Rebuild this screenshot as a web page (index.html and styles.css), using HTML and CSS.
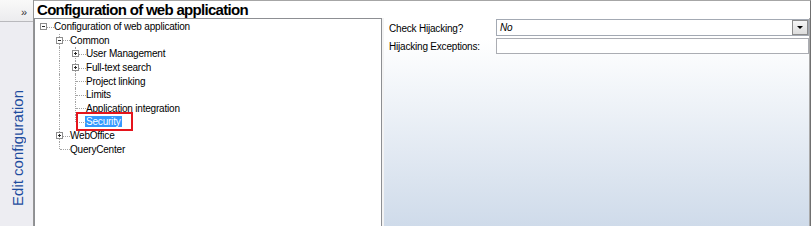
FILE: index.html
```html
<!DOCTYPE html>
<html lang="en">
<head>
<meta charset="utf-8">
<title>Configuration of web application</title>
<link rel="stylesheet" href="styles.css">
</head>
<body>
<div class="app">
  <aside class="side">
    <div class="side-btn">»</div>
    <div class="side-body"><span class="side-label">Edit configuration</span></div>
  </aside>
  <main class="main">
    <div class="title">Configuration of web application</div>
    <div class="content">
      <div class="tree">
        <div class="row">
          <span class="c h"><span class="box"></span></span>
          <span class="t">Configuration of web application</span>
        </div>
        <div class="row">
          <span class="c"></span>
          <span class="c v h"><span class="box"></span></span>
          <span class="t">Common</span>
        </div>
        <div class="row">
          <span class="c"></span>
          <span class="c v"></span>
          <span class="c v h"><span class="box plus"></span></span>
          <span class="t">User Management</span>
        </div>
        <div class="row">
          <span class="c"></span>
          <span class="c v"></span>
          <span class="c v h"><span class="box plus"></span></span>
          <span class="t">Full-text search</span>
        </div>
        <div class="row">
          <span class="c"></span>
          <span class="c v"></span>
          <span class="c v h"></span>
          <span class="t">Project linking</span>
        </div>
        <div class="row">
          <span class="c"></span>
          <span class="c v"></span>
          <span class="c v h"></span>
          <span class="t">Limits</span>
        </div>
        <div class="row">
          <span class="c"></span>
          <span class="c v"></span>
          <span class="c v h"></span>
          <span class="t">Application integration</span>
        </div>
        <div class="row">
          <span class="c"></span>
          <span class="c v"></span>
          <span class="c up h"></span>
          <span class="t sel">Security</span>
        </div>
        <div class="row">
          <span class="c"></span>
          <span class="c v h"><span class="box plus"></span></span>
          <span class="t">WebOffice</span>
        </div>
        <div class="row">
          <span class="c"></span>
          <span class="c up h"></span>
          <span class="t">QueryCenter</span>
        </div>
        <div class="annot"></div>
      </div>
      <div class="split"></div>
      <div class="panel">
        <div class="form">
          <label class="lbl">Check Hijacking?</label>
          <div class="combo"><span class="val">No</span><span class="drop"></span></div>
          <label class="lbl">Hijacking Exceptions:</label>
          <div class="textbox"></div>
        </div>
      </div>
    </div>
  </main>
</div>
</body>
</html>
```

FILE: styles.css
```css
* { box-sizing: border-box; }
html, body { margin: 0; padding: 0; }
body {
  width: 812px;
  height: 226px;
  overflow: hidden;
  background: #ffffff;
  font-family: "Liberation Sans", Arial, sans-serif;
  color: #000;
}
.app { display: flex; height: 226px; }

/* left collapsed sidebar */
.side {
  width: 34px;
  flex: none;
  border-right: 1px solid #959595;
  background: #ededf2;
  display: flex;
  flex-direction: column;
}
.side-btn {
  height: 22px;
  border-bottom: 1px solid #b9b9bd;
  background: linear-gradient(#f9f9f9, #ececee);
  display: flex;
  align-items: center;
  justify-content: flex-end;
  padding: 2px 6px 0 0;
  font-size: 11px;
  color: #333;
}
.side-body {
  flex: 1;
  display: flex;
  flex-direction: column;
  justify-content: flex-end;
  padding-bottom: 20px;
}
.side-label {
  writing-mode: vertical-rl;
  transform: rotate(180deg);
  align-self: flex-start;
  margin-left: 9px;
  font-size: 15px;
  line-height: 17px;
  color: #1d4c9e;
  white-space: nowrap;
}

/* main area */
.main {
  width: 777px;
  flex: none;
  display: flex;
  flex-direction: column;
  border-top: 1px solid #a6a6a6;
  border-right: 1px solid #707070;
}
.title {
  height: 17px;
  line-height: 17px;
  font-size: 15px;
  font-weight: bold;
  letter-spacing: -0.7px;
  padding-left: 3px;
  white-space: nowrap;
}
.content { flex: 1; display: flex; min-height: 0; }

/* tree */
.tree {
  width: 348px;
  flex: none;
  position: relative;
  border: 1px solid #8d8f93;
  border-bottom: none;
  background: #fff;
  padding-top: 1px;
  font-size: 10px;
  letter-spacing: -0.2px;
}
.row {
  display: flex;
  align-items: center;
  height: 13.6px;
  white-space: nowrap;
}
.c {
  position: relative;
  flex: none;
  width: 16px;
  height: 100%;
  display: flex;
  align-items: center;
}
.c.v::before,
.c.up::before {
  content: "";
  position: absolute;
  left: 8px;
  top: 0;
  bottom: 0;
  border-left: 1px dotted #a3a3a3;
}
.c.up::before { bottom: 50%; }
.c.h::after {
  content: "";
  position: absolute;
  left: 9px;
  right: -3px;
  top: 50%;
  border-top: 1px dotted #a3a3a3;
}
.box {
  position: relative;
  z-index: 1;
  width: 7px;
  height: 7px;
  margin-left: 5px;
  border: 1px solid #8e8e8e;
  background: #fff;
}
.box::before {
  content: "";
  position: absolute;
  left: 1px;
  top: 2px;
  width: 3px;
  height: 1px;
  background: #2a2a2a;
}
.box.plus::after {
  content: "";
  position: absolute;
  left: 2px;
  top: 1px;
  width: 1px;
  height: 3px;
  background: #2a2a2a;
}
.t {
  display: inline-block;
  margin-left: 2px;
  padding: 0 1px;
  height: 11px;
  line-height: 11px;
}
.t.sel { background: #3399ff; color: #fff; }
.annot {
  position: absolute;
  left: 41px;
  top: 93px;
  width: 57px;
  height: 19px;
  border: 2px solid #e5141c;
}

.split { width: 2px; flex: none; background: #f3f3f3; }

/* property panel */
.panel {
  flex: 1;
  border-right: 1px solid #a9a9a9;
  background: linear-gradient(#ffffff 10%, #cfdbea);
  padding: 1px 0 0 5px;
}
.form {
  display: grid;
  grid-template-columns: 107px 1fr;
  row-gap: 2px;
  align-items: center;
  font-size: 10px;
  letter-spacing: -0.2px;
}
.lbl { white-space: nowrap; padding-top: 1px; }
.combo {
  height: 17px;
  border: 1px solid #a3a9b3;
  background: #fff;
  display: flex;
  align-items: center;
  padding-left: 3px;
}
.val { font-style: italic; }
.drop {
  margin-left: auto;
  width: 16px;
  height: 15px;
  border: 1px solid #8c8c8c;
  background: linear-gradient(#f6f6f6, #dddddd);
  display: flex;
  align-items: center;
  justify-content: center;
}
.drop::after {
  content: "";
  border-left: 3px solid transparent;
  border-right: 3px solid transparent;
  border-top: 3px solid #000;
}
.textbox {
  height: 16px;
  border: 1px solid #abadb3;
  background: #fff;
}
```
